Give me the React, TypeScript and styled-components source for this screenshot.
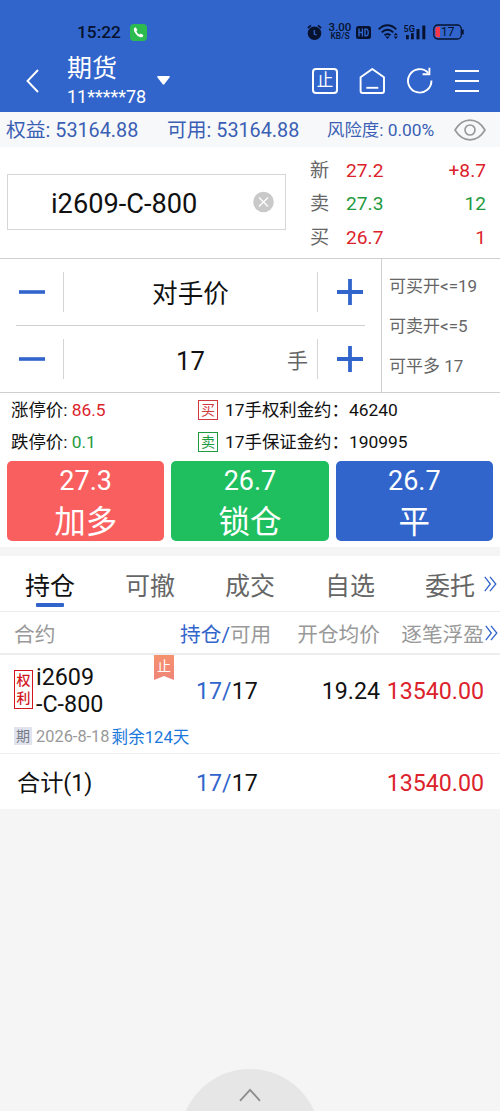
import React from "react";
import styled, { createGlobalStyle } from "styled-components";

const BLUE = "#3165cc";
const RED = "#dc222b";
const GREEN = "#1f9a3f";
const INK = "#111";
const GRAY = "#666";
const LINE = "#cfcfcf";

const GlobalStyle = createGlobalStyle`
  * { box-sizing: border-box; }
  body {
    margin: 0;
    background: #f5f5f5;
    font-family: Roboto, "Noto Sans CJK SC", sans-serif;
    color: ${INK};
  }
  svg { display: block; flex: none; }
`;

const Screen = styled.div`
  width: 500px;
  height: 1111px;
  display: flex;
  flex-direction: column;
  overflow: hidden;
  white-space: nowrap;
`;

/* ---------- header ---------- */
const Header = styled.header`
  height: 112px;
  flex: none;
  background: ${BLUE};
  display: flex;
  flex-direction: column;
`;
const StatusBar = styled.div`
  height: 40px;
  padding: 24px 36px 0 77px;
  display: flex;
  align-items: center;
  color: #06122e;
`;
const Clock = styled.span`
  font-size: 17.3px;
  font-weight: 500;
  line-height: 16px;
  width: 43px;
  margin-right: 10px;
`;
const StatusIcons = styled.div`
  margin-left: auto;
  display: flex;
  align-items: center;
`;
const NetSpeed = styled.div`
  width: 24px;
  margin: 0 4px 0 5px;
  display: flex;
  flex-direction: column;
  align-items: center;
  font-weight: 500;
  font-size: 11.5px;
  line-height: 9px;
`;
const SpeedUnit = styled.span`
  font-size: 8.5px;
  line-height: 9px;
`;
const NavBar = styled.div`
  height: 72px;
  display: flex;
  align-items: center;
  padding: 9px 21px 0 25px;
  color: #fff;
`;
const Account = styled.div`
  width: 80px;
  margin: -9px 10px 0 27px;
  padding-top: 14px;
  display: flex;
  flex-direction: column;
`;
const AccountTitle = styled.span`
  font-size: 25px;
  line-height: 28px;
`;
const AccountNo = styled.span`
  font-size: 18px;
  line-height: 28px;
`;
const NavActions = styled.div`
  margin-left: auto;
  display: flex;
  align-items: center;
  gap: 19px;
  & > :last-child { margin-left: 2px; }
`;
const StopBox = styled.div`
  width: 26px;
  height: 26px;
  margin-right: 2px;
  border: 2px solid #fff;
  border-radius: 4px;
  font-size: 16.5px;
  line-height: 22px;
  text-align: center;
`;

/* ---------- funds ---------- */
const Funds = styled.div`
  height: 35px;
  flex: none;
  background: #f7f8fa;
  color: #3a5fb4;
  display: flex;
  align-items: center;
  padding: 0 13px 0 6px;
  font-size: 19.8px;
`;
const Fund = styled.span<{ $w: number; $small?: boolean }>`
  width: ${(p) => p.$w}px;
  padding-top: ${(p) => (p.$small ? 0 : 2)}px;
  line-height: 34px;
  font-size: ${(p) => (p.$small ? "17.4px" : "inherit")};
`;

/* ---------- quote ---------- */
const Quote = styled.section`
  height: 112px;
  flex: none;
  background: #fff;
  border-bottom: 1px solid ${LINE};
  display: flex;
  padding: 6px 14px 0 7px;
`;
const ContractInput = styled.div`
  width: 279px;
  height: 56px;
  margin: 21px 24px 0 0;
  border: 1px solid #d6d6d6;
  display: flex;
  align-items: center;
  justify-content: space-between;
  padding: 3px 11px 0 43px;
  font-size: 27.2px;
  & > svg { margin-top: -3px; }
`;
const QuoteList = styled.div`
  flex: 1;
  padding-top: 1px;
  display: flex;
  flex-direction: column;
`;
const QuoteRow = styled.div<{ $color: string }>`
  display: grid;
  grid-template-columns: 36px 1fr auto;
  color: ${(p) => p.$color};
  font-size: 19.2px;
  line-height: 33.4px;
`;
const QuoteLabel = styled.span`
  color: ${GRAY};
`;

/* ---------- order entry ---------- */
const Entry = styled.section`
  height: 134px;
  flex: none;
  background: #fff;
  border-bottom: 1px solid ${LINE};
  display: flex;
`;
const Steppers = styled.div`
  width: 382px;
  border-right: 1px solid ${LINE};
  padding: 0 16px;
`;
const Stepper = styled.div`
  height: 66px;
  display: flex;
  align-items: center;
  & + & { height: 67px; border-top: 1px solid ${LINE}; }
`;
const StepButton = styled.button<{ $side: "left" | "right" }>`
  width: 48px;
  height: 40px;
  padding: 0;
  border: 0;
  background: none;
  display: flex;
  align-items: center;
  justify-content: ${(p) => (p.$side === "left" ? "flex-start" : "center")};
  padding-left: ${(p) => (p.$side === "left" ? 3 : 16)}px;
  border-${(p) => (p.$side === "left" ? "right" : "left")}: 1px solid #d4d4d4;
`;
const StepValue = styled.div`
  flex: 1;
  display: grid;
  grid-template-columns: 1fr auto 1fr;
  align-items: center;
  padding: 3px 9px 0;
  font-size: 25.6px;
  line-height: 40px;
  & > :nth-child(2) { grid-column: 2; }
`;
const Unit = styled.span`
  color: ${GRAY};
  font-size: 21px;
  text-align: right;
`;
const Limits = styled.div`
  padding: 7px 0 0 7px;
  color: ${GRAY};
  font-size: 17px;
  line-height: 40px;
`;

/* ---------- price info ---------- */
const Info = styled.section`
  height: 68px;
  flex: none;
  background: #fff;
  padding: 1px 11px 0;
`;
const InfoRow = styled.div`
  height: 32px;
  display: flex;
  align-items: center;
  font-size: 17.4px;
  line-height: 32px;
`;
const InfoLimit = styled.span`
  width: 187px;
`;
const Tone = styled.span<{ $color: string }>`
  color: ${(p) => p.$color};
`;
const SideTag = styled.span<{ $color: string }>`
  width: 20px;
  height: 20px;
  margin: -1px 7px 0 0;
  border: 1px solid ${(p) => p.$color};
  color: ${(p) => p.$color};
  font-size: 14px;
  line-height: 18px;
  text-align: center;
`;

/* ---------- trade buttons ---------- */
const Actions = styled.section`
  height: 86px;
  flex: none;
  background: #fff;
  display: grid;
  grid-template-columns: repeat(3, 1fr);
  grid-template-rows: 80px;
  gap: 7px;
  padding: 0 7px;
`;
const TradeButton = styled.button<{ $bg: string }>`
  height: 80px;
  border: 0;
  padding: 0;
  border-radius: 5px;
  background: ${(p) => p.$bg};
  color: #fff;
  font-family: inherit;
  display: flex;
  flex-direction: column;
  align-items: center;
  justify-content: flex-start;
`;
const TradePrice = styled.span`
  font-size: 27px;
  line-height: 40px;
`;
const TradeLabel = styled.span`
  font-size: 31.5px;
  line-height: 40px;
  padding-top: 2px;
  height: 40px;
`;

/* ---------- positions ---------- */
const Tabs = styled.nav`
  height: 56px;
  flex: none;
  margin-top: 9px;
  background: #fff;
  border-bottom: 1px solid #ececec;
  display: flex;
  padding-right: 4px;
`;
const Tab = styled.div<{ $active?: boolean }>`
  width: 100px;
  flex: none;
  display: flex;
  flex-direction: column;
  align-items: center;
  font-size: 25px;
  line-height: 47px;
  padding-top: 7px;
  color: ${(p) => (p.$active ? INK : GRAY)};
  &::after {
    content: "";
    width: 28px;
    height: 4px;
    margin-top: -7px;
    border-radius: 1px;
    background: ${(p) => (p.$active ? BLUE : "transparent")};
  }
`;
const TabMore = styled.div`
  margin-left: -16px;
  padding-top: 20px;
`;
const Cols = styled.div`
  display: grid;
  grid-template-columns: 166px 91px 1fr 104px 13px;
  align-items: center;
`;
const TableHead = styled(Cols)`
  height: 43px;
  flex: none;
  padding: 0 2px 0 14px;
  grid-template-columns: 166px 91px 1fr 104px 14px;
  background: #fff;
  border-bottom: 2px solid #ededed;
  color: #999;
  font-size: 20.7px;
  & > svg { margin-left: 1px; }
`;
const Right = styled.span<{ $color?: string }>`
  text-align: right;
  color: ${(p) => p.$color || "inherit"};
`;
const Position = styled.div`
  height: 99px;
  flex: none;
  background: #fff;
  border-bottom: 1px solid #efefef;
  padding: 0 3px 0 14px;
`;
const PositionCols = styled(Cols)`
  height: 71px;
  font-size: 23.2px;
  grid-template-columns: 182px 75px 1fr 104px 13px;
`;
const Contract = styled.div`
  display: flex;
  align-self: start;
  align-items: flex-start;
  line-height: 27px;
  padding-top: 9px;
  font-size: 23.3px;
`;
const RightsTag = styled.span`
  width: 19px;
  height: 39px;
  margin: 6px 3px 0 0;
  border: 1.5px solid #d3161e;
  color: #d3161e;
  font-size: 14px;
  font-weight: 500;
  line-height: 18px;
  text-align: center;
  white-space: normal;
`;
const ContractName = styled.span`
  width: 112px;
`;
const StopFlag = styled.span`
  width: 20px;
  height: 25px;
  margin: -9px 0 0 6px;
  background: linear-gradient(#f6916f, #ef8478);
  clip-path: polygon(0 0, 100% 0, 100% 100%, 50% 84%, 0 100%);
  color: #fff;
  font-size: 14px;
  line-height: 22px;
  text-align: center;
`;
const Expiry = styled.div`
  display: flex;
  align-items: center;
  height: 20px;
  color: #999;
  font-size: 16.4px;
`;
const PeriodTag = styled.span`
  width: 18px;
  height: 18px;
  margin-right: 4px;
  background: #e1e4ee;
  color: #777b88;
  font-size: 14px;
  line-height: 18px;
  text-align: center;
`;
const Remaining = styled.span`
  margin-left: 2px;
  color: #1a78dc;
  font-size: 16.6px;
`;
const Total = styled(Cols)`
  height: 55px;
  flex: none;
  padding: 4px 3px 0 17px;
  grid-template-columns: 179px 75px 1fr 104px 13px;
  background: #fff;
  font-size: 23.2px;
  line-height: 51px;
`;

/* ---------- pull-up handle ---------- */
const Footer = styled.footer`
  flex: 1;
  display: flex;
  align-items: flex-end;
  justify-content: center;
  overflow: hidden;
`;
const Handle = styled.div`
  width: 140px;
  height: 140px;
  flex: none;
  margin-bottom: -98px;
  padding-top: 19px;
  border-radius: 50%;
  background: #e6e6e6;
  display: flex;
  justify-content: center;
`;

const Minus = () => (
  <svg width="26" height="26" viewBox="0 0 26 26" stroke={BLUE} strokeWidth="3.6">
    <path d="M0 13H26" />
  </svg>
);
const Plus = () => (
  <svg width="26" height="26" viewBox="0 0 26 26" stroke={BLUE} strokeWidth="3.8">
    <path d="M0 13H26M13 0V26" />
  </svg>
);
const More = () => (
  <svg width="13" height="16" viewBox="0 0 13 16" fill="none" stroke={BLUE} strokeWidth="1.3">
    <path d="M0.8 0.8L6.3 8L0.8 15.2M6 0.8L11.8 8L6 15.2" />
  </svg>
);

const quotes = [
  { label: "新", price: "27.2", extra: "+8.7", color: RED },
  { label: "卖", price: "27.3", extra: "12", color: GREEN },
  { label: "买", price: "26.7", extra: "1", color: RED },
];

const trades = [
  { price: "27.3", label: "加多", bg: "#fa5f60" },
  { price: "26.7", label: "锁仓", bg: "#1fbf60" },
  { price: "26.7", label: "平", bg: BLUE },
];

const Holding = () => (
  <span>
    <Tone $color={BLUE}>17/</Tone>17
  </span>
);

export default function App() {
  return (
    <Screen>
      <GlobalStyle />
      <Header>
        <StatusBar>
          <Clock>15:22</Clock>
          <svg width="17" height="17" viewBox="0 0 17 17">
            <rect width="17" height="17" rx="4" fill="#2dbb50" />
            <path d="M4.2 4.1L5.7 3.3L7.4 5.9L6.4 7.2C7 8.6 8.1 9.8 9.5 10.5L10.8 9.6L13.4 11.3L12.7 12.8C11.8 14 9.2 13.2 7 11.2C4.7 9.1 3.1 6 4.2 4.1Z" fill="#fff" />
          </svg>
          <StatusIcons>
            <svg width="16" height="17" viewBox="0 0 16 17">
              <circle cx="7.5" cy="9.3" r="6.8" fill="currentColor" />
              <path d="M0.8 4.2L4 1.4M14.2 4.2L11 1.4" stroke="currentColor" strokeWidth="1.7" />
              <path d="M7.3 6V10L9.7 11" stroke={BLUE} strokeWidth="1.3" fill="none" />
            </svg>
            <NetSpeed>
              3.00
              <SpeedUnit>KB/S</SpeedUnit>
            </NetSpeed>
            <svg width="15" height="13" viewBox="0 0 15 13">
              <rect width="15" height="13" rx="2.5" fill="currentColor" />
              <path d="M3 2.6V10.4M6.4 2.6V10.4M3 6.5H6.4M9 3.2V9.8H10.2C12.9 9.8 12.9 3.2 10.2 3.2Z" stroke={BLUE} strokeWidth="1.4" fill="none" />
            </svg>
            <svg width="21" height="16" viewBox="0 0 21 16" fill="none" stroke="currentColor" strokeWidth="2" style={{ marginLeft: 7 }}>
              <path d="M0.8 5.4C6 0 13 0 18.2 5.4M3.7 8.4C7.3 4.9 11.7 4.9 15.3 8.4M6.5 11.2C8.5 9.5 10.5 9.5 12.5 11.2" />
              <path d="M7.3 12.5L9.5 15L11.7 12.5Z" fill="currentColor" stroke="none" />
              <path d="M15.7 11.3L17.8 8.8L19.9 11.3ZM15.7 12.6L17.8 15.1L19.9 12.6Z" fill="currentColor" stroke="none" />
            </svg>
            <svg width="22" height="16" viewBox="0 0 22 16" fill="currentColor" style={{ marginLeft: 5 }}>
              <text x="-0.5" y="7.6" fontSize="9" fontWeight="600">5G</text>
              <rect x="2" y="11" width="2.8" height="4.3" />
              <rect x="7" y="9.2" width="2.8" height="6.1" />
              <rect x="12.5" y="5" width="3" height="10.3" />
              <rect x="18.3" y="1.5" width="3" height="13.8" />
            </svg>
            <svg width="31" height="16" viewBox="0 0 31 16" style={{ marginLeft: 7 }}>
              <rect x="0.8" y="1" width="27.5" height="14" rx="4" fill="none" stroke="currentColor" strokeWidth="1.3" />
              <path d="M29.9 5.5V10.5" stroke="currentColor" strokeWidth="1.6" />
              <path d="M5 2.8H7V13.2H5Q2.4 13.2 2.4 10.5V5.5Q2.4 2.8 5 2.8Z" fill="#f4384a" />
              <text x="8" y="12.2" fontSize="12" fill="currentColor">17</text>
            </svg>
          </StatusIcons>
        </StatusBar>
        <NavBar>
          <svg width="15" height="24" viewBox="0 0 15 24" fill="none" stroke="#fff" strokeWidth="1.9">
            <path d="M13 1L2.5 12L13 23" />
          </svg>
          <Account>
            <AccountTitle>期货</AccountTitle>
            <AccountNo>11*****78</AccountNo>
          </Account>
          <svg width="13" height="9" viewBox="0 0 13 9" fill="#fff">
            <path d="M1 0H12Q13.3 0.2 12.5 1.4L7.3 8.3Q6.5 9 5.7 8.3L0.5 1.4Q-0.3 0.2 1 0Z" />
          </svg>
          <NavActions>
            <StopBox>止</StopBox>
            <svg width="28" height="28" viewBox="0 0 28 28" fill="none" stroke="#fff" strokeWidth="1.9" strokeLinejoin="round">
              <path d="M1.6 10.2L13.3 2L25 10.2V24Q25 26 23 26H3.6Q1.6 26 1.6 24Z" />
              <path d="M7.3 20.8H19.3" />
            </svg>
            <svg width="28" height="28" viewBox="0 0 28 28" fill="none" stroke="#fff" strokeWidth="1.9">
              <path d="M25.4 13.5A11.7 11.7 0 1 1 22.2 5.8" />
              <path d="M23.4 0.8V7.2H16.6" />
            </svg>
            <svg width="24" height="24" viewBox="0 0 24 24" stroke="#fff" strokeWidth="1.9">
              <path d="M0 2H24M0 12H24M0 22H24" />
            </svg>
          </NavActions>
        </NavBar>
      </Header>

      <Funds>
        <Fund $w={161}>权益: 53164.88</Fund>
        <Fund $w={160}>可用: 53164.88</Fund>
        <Fund $w={127} $small>风险度: 0.00%</Fund>
        <svg width="32" height="22" viewBox="0 0 32 22" fill="none" stroke="#999" strokeWidth="1.7">
          <path d="M1 11Q7 1.2 16 1.2T31 11Q25 20.8 16 20.8T1 11Z" />
          <circle cx="16" cy="11" r="5" />
        </svg>
      </Funds>

      <Quote>
        <ContractInput>
          i2609-C-800
          <svg width="22" height="22" viewBox="0 0 22 22">
            <circle cx="11.5" cy="11" r="10.3" fill="#c9c9c9" />
            <path d="M7 6.5L16 15.5M16 6.5L7 15.5" stroke="#fff" strokeWidth="1.3" />
          </svg>
        </ContractInput>
        <QuoteList>
          {quotes.map((q) => (
            <QuoteRow key={q.label} $color={q.color}>
              <QuoteLabel>{q.label}</QuoteLabel>
              <span>{q.price}</span>
              <span>{q.extra}</span>
            </QuoteRow>
          ))}
        </QuoteList>
      </Quote>

      <Entry>
        <Steppers>
          <Stepper>
            <StepButton $side="left"><Minus /></StepButton>
            <StepValue><i /><span>对手价</span></StepValue>
            <StepButton $side="right"><Plus /></StepButton>
          </Stepper>
          <Stepper>
            <StepButton $side="left"><Minus /></StepButton>
            <StepValue><i /><span>17</span><Unit>手</Unit></StepValue>
            <StepButton $side="right"><Plus /></StepButton>
          </Stepper>
        </Steppers>
        <Limits>
          <div>可买开&lt;=19</div>
          <div>可卖开&lt;=5</div>
          <div>可平多 17</div>
        </Limits>
      </Entry>

      <Info>
        <InfoRow>
          <InfoLimit>涨停价: <Tone $color={RED}>86.5</Tone></InfoLimit>
          <SideTag $color="#d0393e">买</SideTag>
          17手权利金约：46240
        </InfoRow>
        <InfoRow>
          <InfoLimit>跌停价: <Tone $color={GREEN}>0.1</Tone></InfoLimit>
          <SideTag $color={GREEN}>卖</SideTag>
          17手保证金约：190995
        </InfoRow>
      </Info>

      <Actions>
        {trades.map((t) => (
          <TradeButton key={t.label} $bg={t.bg}>
            <TradePrice>{t.price}</TradePrice>
            <TradeLabel>{t.label}</TradeLabel>
          </TradeButton>
        ))}
      </Actions>

      <Tabs>
        <Tab $active>持仓</Tab>
        <Tab>可撤</Tab>
        <Tab>成交</Tab>
        <Tab>自选</Tab>
        <Tab>委托</Tab>
        <TabMore><More /></TabMore>
      </Tabs>
      <TableHead>
        <span>合约</span>
        <span><Tone $color={BLUE}>持仓/</Tone>可用</span>
        <Right>开仓均价</Right>
        <Right>逐笔浮盈</Right>
        <More />
      </TableHead>
      <Position>
        <PositionCols>
          <Contract>
            <RightsTag>权利</RightsTag>
            <ContractName>i2609<br />-C-800</ContractName>
            <StopFlag>止</StopFlag>
          </Contract>
          <Holding />
          <Right>19.24</Right>
          <Right $color={RED}>13540.00</Right>
        </PositionCols>
        <Expiry>
          <PeriodTag>期</PeriodTag>
          2026-8-18
          <Remaining>剩余124天</Remaining>
        </Expiry>
      </Position>
      <Total>
        <span>合计(1)</span>
        <Holding />
        <span />
        <Right $color={RED}>13540.00</Right>
      </Total>

      <Footer>
        <Handle>
          <svg width="22" height="14" viewBox="0 0 22 14" fill="none" stroke="#8c8c8c" strokeWidth="1.8">
            <path d="M1 12.8L11 1.8L21 12.8" />
          </svg>
        </Handle>
      </Footer>
    </Screen>
  );
}
